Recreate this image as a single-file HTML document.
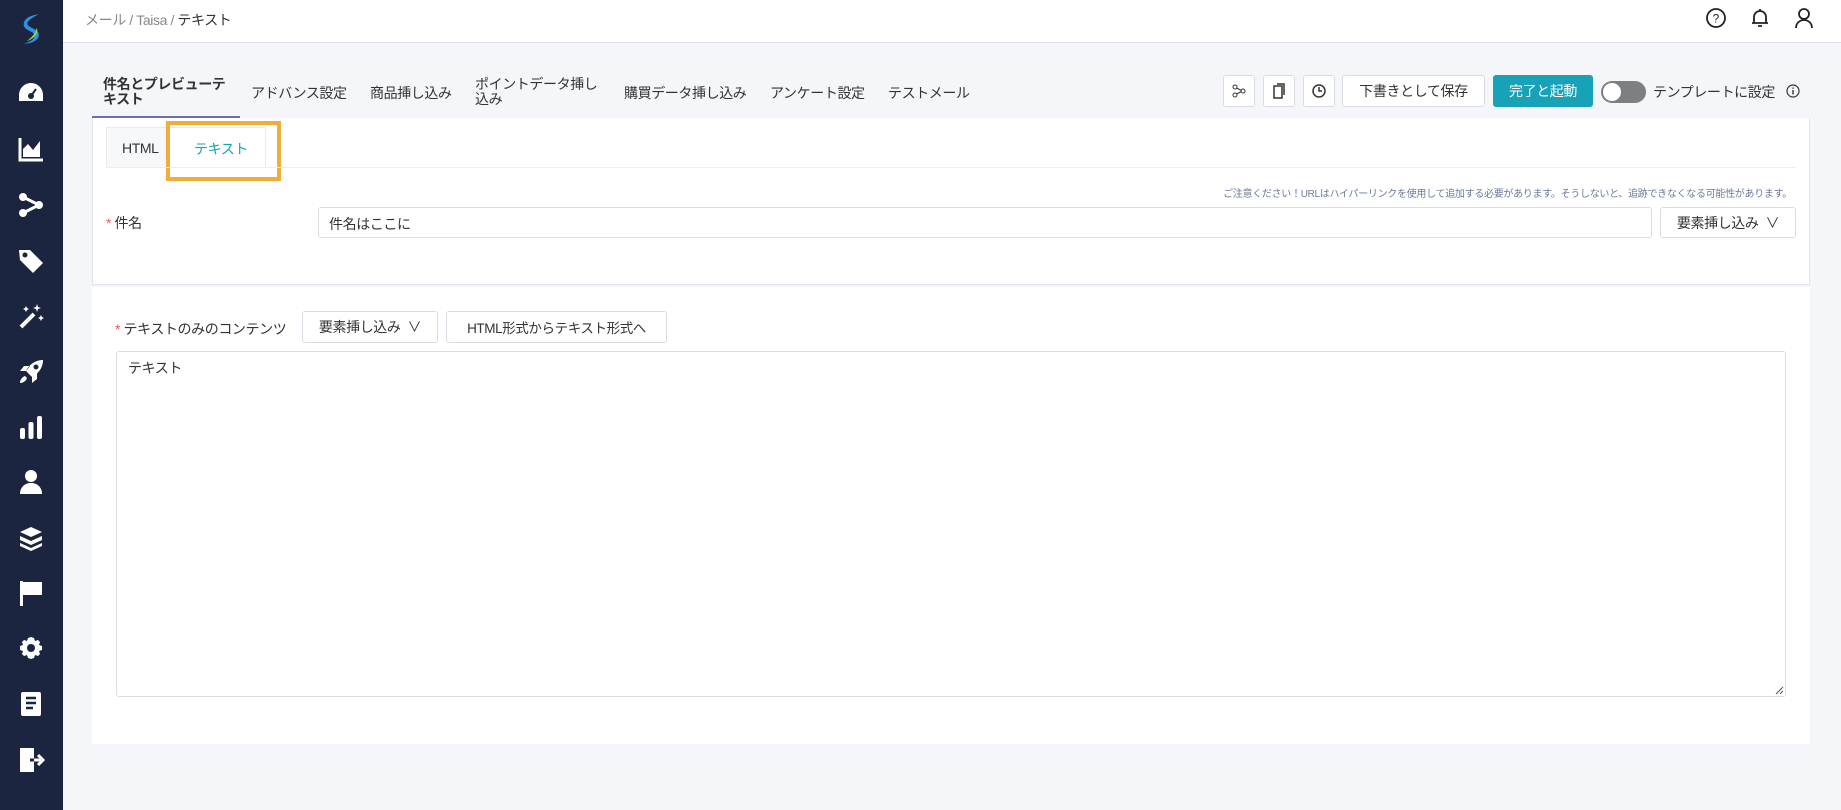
<!DOCTYPE html>
<html><head><meta charset="utf-8"><style>
*{box-sizing:border-box;margin:0;padding:0}
body{width:1841px;height:810px;overflow:hidden;background:#f4f6fa;font-family:"Liberation Sans","Noto Sans CJK JP",sans-serif;color:#333;position:relative}
.abs{position:absolute}
.side{left:0;top:0;width:63px;height:810px;background:#1b2540}
.side svg{position:absolute;left:17px;width:28px;height:28px}
.hdr{left:63px;top:0;right:0;height:43px;background:#fff;border-bottom:1px solid #dde2ea}
.t{position:absolute;font-size:14px;white-space:nowrap;letter-spacing:-0.4px}
.btn{position:absolute;background:#fff;border:1px solid #d9dde3;border-radius:3px;font-size:14px;display:flex;align-items:center;justify-content:center;color:#333;letter-spacing:-0.4px}
.card{background:#fff}
</style></head><body>
<div class="abs side">
<svg style="top:12px;left:15px;width:32px;height:34px" viewBox="0 0 28 30"><path d="M21 2C12 3 6 7 8 13c2 4 10 4 9 9-1 3-5 5-10 6 8 0 14-3 14-8 0-5-9-6-10-9-1-3 4-6 10-9z" fill="#2f8fe0"/><path d="M19 14c2 4-1 9-9 12 5-4 8-7 9-12z" fill="#9bd34a"/></svg>
<svg style="top:79px" viewBox="0 0 28 28"><path d="M14 4a12 12 0 0 0-12 12v6h24v-6A12 12 0 0 0 14 4z" fill="#fff"/><circle cx="14" cy="17" r="3" fill="#1b2540"/><path d="M14 17l5-7" stroke="#1b2540" stroke-width="2"/></svg>
<svg style="top:135px" viewBox="0 0 28 28"><path d="M3 3v22h23" stroke="#fff" stroke-width="3" fill="none"/><path d="M6 22V14l5-5 5 6 7-9v16z" fill="#fff"/></svg>
<svg style="top:191px" viewBox="0 0 28 28"><circle cx="6" cy="6" r="4" fill="#fff"/><circle cx="6" cy="22" r="4" fill="#fff"/><circle cx="22" cy="14" r="4" fill="#fff"/><path d="M6 6l16 8-16 8" stroke="#fff" stroke-width="3" fill="none"/></svg>
<svg style="top:247px" viewBox="0 0 28 28"><path d="M2 3h11l13 13-10 10L3 13z" fill="#fff"/><circle cx="8" cy="8" r="2.5" fill="#1b2540"/></svg>
<svg style="top:302px" viewBox="0 0 28 28"><path d="M4 25L17 12" stroke="#fff" stroke-width="4"/><path d="M20 2l1 3 3 1-3 1-1 3-1-3-3-1 3-1zM9 4l1 2 2 1-2 1-1 2-1-2-2-1 2-1zM24 13l1 2 2 1-2 1-1 2-1-2-2-1 2-1z" fill="#fff"/></svg>
<svg style="top:358px" viewBox="0 0 28 28"><path d="M26 2C18 2 12 7 9 13l6 6c6-3 11-9 11-17zM9 13H3l4-5h6zM15 19v6l5-4v-6zM8 18c-3 1-5 4-5 7 3 0 6-2 7-5z" fill="#fff"/><circle cx="19" cy="9" r="2.5" fill="#1b2540"/></svg>
<svg style="top:413px" viewBox="0 0 28 28"><rect x="3" y="15" width="5" height="11" rx="2" fill="#fff"/><rect x="11.5" y="9" width="5" height="17" rx="2" fill="#fff"/><rect x="20" y="3" width="5" height="23" rx="2" fill="#fff"/></svg>
<svg style="top:468px" viewBox="0 0 28 28"><circle cx="14" cy="8" r="6" fill="#fff"/><path d="M3 26c0-7 5-11 11-11s11 4 11 11z" fill="#fff"/></svg>
<svg style="top:524px" viewBox="0 0 28 28"><path d="M14 3l11 5-11 5L3 8zM3 12l11 5 11-5v4l-11 5-11-5zM3 19l11 5 11-5v3l-11 5-11-5z" fill="#fff"/></svg>
<svg style="top:579px" viewBox="0 0 28 28"><rect x="3" y="2" width="3" height="25" fill="#fff"/><path d="M6 3h19v13H6z" fill="#fff"/></svg>
<svg style="top:634px" viewBox="0 0 28 28"><path d="M14 3l3 1 1 3 3-1 2 2-1 3 3 1v4l-3 1 1 3-2 2-3-1-1 3-3 1-3-1-1-3-3 1-2-2 1-3-3-1v-4l3-1-1-3 2-2 3 1 1-3z" fill="#fff"/><circle cx="14" cy="14" r="4" fill="#1b2540"/></svg>
<svg style="top:690px" viewBox="0 0 28 28"><rect x="4" y="2" width="20" height="24" rx="2" fill="#fff"/><path d="M9 8h10M9 13h10M9 18h7" stroke="#1b2540" stroke-width="2.5"/></svg>
<svg style="top:746px" viewBox="0 0 28 28"><path d="M3 2h14v24H3z" fill="#fff"/><path d="M13 14h12M21 9l5 5-5 5" stroke="#fff" stroke-width="3" fill="none"/><path d="M13 14h4" stroke="#1b2540" stroke-width="3"/></svg>
</div>
<div class="abs hdr"></div>
<div class="t" style="left:85px;top:10px;color:#888">メール / Taisa / <span style="color:#333">テキスト</span></div>
<svg class="abs" style="left:1705px;top:7px" width="22" height="22" viewBox="0 0 22 22"><circle cx="11" cy="11" r="9" fill="none" stroke="#222" stroke-width="1.8"/><text x="11" y="15.5" font-size="12" text-anchor="middle" font-family="Liberation Sans" fill="#222">?</text></svg>
<svg class="abs" style="left:1749px;top:7px" width="22" height="22" viewBox="0 0 22 22"><path d="M5 16V10a6 6 0 0 1 12 0v6zM3 16h16M9 19h4M11 2v2" stroke="#222" stroke-width="1.8" fill="none"/></svg>
<svg class="abs" style="left:1793px;top:7px" width="22" height="22" viewBox="0 0 22 22"><circle cx="11" cy="7" r="5" fill="none" stroke="#222" stroke-width="1.8"/><path d="M3 21c0-5 4-8 8-8s8 3 8 8" stroke="#222" stroke-width="1.8" fill="none"/></svg>

<div class="t" style="left:103px;top:77px;font-weight:bold;line-height:15px;font-size:14px">件名とプレビューテ<br>キスト</div>
<div class="abs" style="left:92px;top:116px;width:148px;height:2px;background:#6a6fb5"></div>
<div class="t" style="left:251px;top:83px">アドバンス設定</div>
<div class="t" style="left:370px;top:83px">商品挿し込み</div>
<div class="t" style="left:475px;top:77px;line-height:15px">ポイントデータ挿し<br>込み</div>
<div class="t" style="left:624px;top:83px">購買データ挿し込み</div>
<div class="t" style="left:770px;top:83px">アンケート設定</div>
<div class="t" style="left:888px;top:83px">テストメール</div>

<div class="btn" style="left:1223px;top:75px;width:32px;height:32px"><svg width="14" height="14" viewBox="0 0 14 14"><circle cx="3" cy="3" r="2" fill="none" stroke="#333"/><circle cx="3" cy="11" r="2" fill="none" stroke="#333"/><circle cx="11" cy="7" r="2" fill="none" stroke="#333"/><path d="M4.5 4l5 2.5M4.5 10l5-2.5" stroke="#333"/></svg></div>
<div class="btn" style="left:1263px;top:75px;width:32px;height:32px"><svg width="14" height="16" viewBox="0 0 14 16"><rect x="2" y="3" width="8" height="12" fill="none" stroke="#333" stroke-width="1.5"/><path d="M5 1h7v11" stroke="#333" stroke-width="1.5" fill="none"/></svg></div>
<div class="btn" style="left:1303px;top:75px;width:32px;height:32px"><svg width="16" height="16" viewBox="0 0 16 16"><circle cx="8" cy="8" r="6" fill="none" stroke="#333" stroke-width="1.5"/><path d="M8 4v4h3" stroke="#333" stroke-width="1.5" fill="none"/></svg></div>
<div class="btn" style="left:1342px;top:75px;width:143px;height:32px">下書きとして保存</div>
<div class="btn" style="left:1493px;top:75px;width:100px;height:32px;background:#17a2b8;border-color:#17a2b8;color:#fff">完了と起動</div>
<div class="abs" style="left:1601px;top:81px;width:45px;height:22px;border-radius:11px;background:#7d7f82"><div class="abs" style="left:2px;top:2px;width:18px;height:18px;border-radius:50%;background:#fff"></div></div>
<div class="t" style="left:1653px;top:82px">テンプレートに設定</div>
<svg class="abs" style="left:1786px;top:84px" width="14" height="14" viewBox="0 0 14 14"><circle cx="7" cy="7" r="6" fill="none" stroke="#333" stroke-width="1.2"/><path d="M7 6v4.5M7 3.5v1.2" stroke="#333" stroke-width="1.4"/></svg>

<div class="abs card" style="left:92px;top:118px;width:1718px;height:167px;border:1px solid #e1e5ea;border-top:none"></div>
<div class="abs" style="left:106px;top:127px;width:160px;height:41px;background:#f7f8fa;border:1px solid #e8eaee;border-bottom:none"></div>
<div class="abs" style="left:170px;top:128px;width:95px;height:40px;background:#fff"></div>
<div class="t" style="left:122px;top:140px">HTML</div>
<div class="abs" style="left:166px;top:121px;width:115px;height:60px;border:4px solid #f0ad3a"></div>
<div class="t" style="left:194px;top:139px;color:#17a2b8">テキスト</div>
<div class="abs" style="left:106px;top:167px;width:1690px;height:1px;background:#eceef2"></div>
<div class="t" style="right:49px;top:185px;font-size:10px;color:#6b7a99;letter-spacing:-0.3px">ご注意ください！URLはハイパーリンクを使用して追加する必要があります。そうしないと、追跡できなくなる可能性があります。</div>
<div class="t" style="left:106px;top:213px"><span style="color:#e55">*</span> 件名</div>
<div class="abs" style="left:318px;top:207px;width:1334px;height:31px;border:1px solid #dadde3;border-radius:3px"></div>
<div class="t" style="left:329px;top:214px">件名はここに</div>
<div class="btn" style="left:1660px;top:207px;width:136px;height:31px">要素挿し込み&nbsp;&nbsp;∨</div>

<div class="abs card" style="left:92px;top:287px;width:1718px;height:457px"></div>
<div class="t" style="left:115px;top:319px"><span style="color:#e55">*</span> テキストのみのコンテンツ</div>
<div class="btn" style="left:302px;top:311px;width:136px;height:32px">要素挿し込み&nbsp;&nbsp;∨</div>
<div class="btn" style="left:446px;top:311px;width:221px;height:32px;font-size:13.5px">HTML形式からテキスト形式へ</div>
<div class="abs" style="left:116px;top:351px;width:1670px;height:346px;border:1px solid #dadde3;border-radius:3px"></div>
<div class="t" style="left:128px;top:358px">テキスト</div>
<svg class="abs" style="left:1774px;top:685px" width="10" height="10"><path d="M9 2L2 9M9 6L6 9" stroke="#555"/></svg>
</body></html>
